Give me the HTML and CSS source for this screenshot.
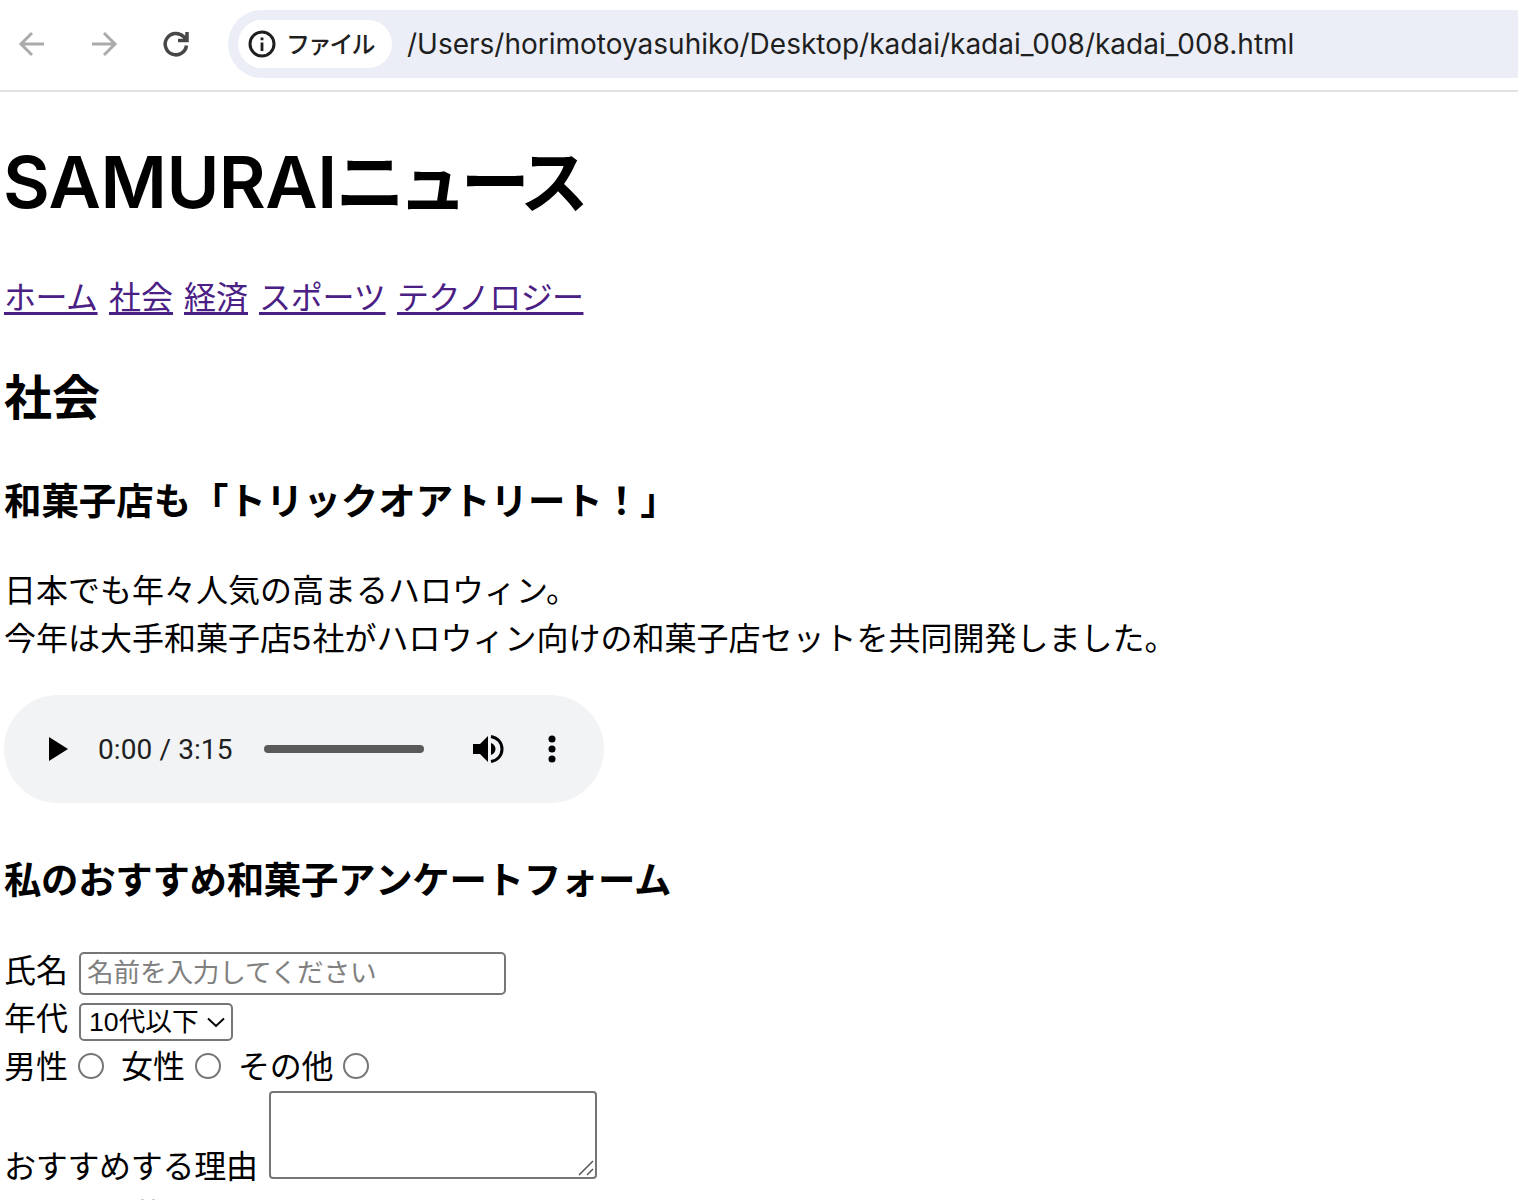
FILE: index.html
```html
<!DOCTYPE html>
<html lang="ja">
<head>
<meta charset="utf-8">
<title>SAMURAIニュース</title>
<link rel="stylesheet" href="styles.css">
</head>
<body>
<div class="toolbar">
  <svg class="tool-icon back" width="28" height="28" viewBox="0 0 28 28"><path d="M26 14H4M14 3 3 14l11 11"/></svg>
  <svg class="tool-icon forward" width="28" height="28" viewBox="0 0 28 28"><path d="M2 14h22M14 3l11 11-11 11"/></svg>
  <svg class="tool-icon reload" width="28" height="28" viewBox="0 0 28 28"><path d="M24.5 15.500A10.700 10.700 0 1 1 21.500 6.600l3 3M25 2v8.500H16"/></svg>
  <div class="address">
    <div class="chip">
      <svg width="28" height="28" viewBox="0 0 28 28"><circle cx="14" cy="14" r="12" fill="none" stroke="#1f1f1f" stroke-width="3"/><path d="M12.600 12.500h2.800v8.500h-2.800zM12.600 7.500h2.800v2.800h-2.800z" fill="#1f1f1f"/></svg>
      <span class="chip-text">ファイル</span>
    </div>
    <span class="url">/Users/horimotoyasuhiko/Desktop/kadai/kadai_008/kadai_008.html</span>
  </div>
</div>
<main class="page">
  <h1 class="title">SAMURAI<span class="title-kana">ニュース</span></h1>
  <nav class="nav"><a class="t3" href="#">ホーム</a><a href="#">社会</a><a href="#">経済</a><a class="t4" href="#">スポーツ</a><a class="t6" href="#">テクノロジー</a></nav>
  <h2 class="section">社会</h2>
  <h3 class="headline">和菓子店も「トリックオアトリート！」</h3>
  <p class="story">日本でも年々人気の高まるハロウィン。<br>今年は大手和菓子店<span class="digit">5</span>社がハロウィン向けの和菓子店セットを共同開発しました。</p>
  <div class="player">
    <svg class="play" width="20" height="24" viewBox="0 0 20 24"><path d="M0 0v24l19-12z"/></svg>
    <span class="time">0:00 / 3:15</span>
    <div class="track"></div>
    <svg class="volume" width="32" height="30" viewBox="0 0 32 30"><path d="M0 10v10h7l8 8V2l-8 8zM18 9v12c3-1 4.500-3.500 4.500-6S21 10 18 9z"/><path d="M18 2.400c7 1.200 11 6.600 11 12.600s-4 11.400-11 12.600" fill="none" stroke="#000" stroke-width="3"/></svg>
    <svg class="more" width="8" height="28" viewBox="0 0 8 28"><circle cx="4" cy="4" r="3.500"/><circle cx="4" cy="14" r="3.500"/><circle cx="4" cy="24" r="3.500"/></svg>
  </div>
  <h3 class="headline form-title">私のおすすめ和菓子アンケートフォーム</h3>
  <form class="survey">
    <div class="row"><label>氏名</label><input class="name" type="text" placeholder="名前を入力してください"></div>
    <div class="row"><label>年代</label><div class="age">10代以下<svg width="18" height="12" viewBox="0 0 18 12"><path d="M1 2.500 9 10 17 2.500" fill="none" stroke="#000" stroke-width="1.900"/></svg></div></div>
    <div class="row radios"><label>男性</label><input class="radio" type="radio" name="g"><label>女性</label><input class="radio" type="radio" name="g"><label class="other">その他</label><input class="radio" type="radio" name="g"></div>
    <div class="row reason"><label>おすすめする理由</label><div class="area"><textarea class="text"></textarea><svg class="grip" width="16" height="16" viewBox="0 0 16 16"><path d="M1 15 15 1M9 15l6-6" fill="none" stroke="#555" stroke-width="1.500"/></svg></div></div>
    <div class="row"><label>好きな和菓子はありますか</label></div>
  </form>
</main>
</body>
</html>
```
FILE: styles.css
```css
html, body { margin: 0; height: 1200px; overflow: hidden; background: #fff; }
body { color: #000; font-family: "Liberation Sans", "Noto Sans CJK JP", sans-serif; font-size: 32px; }
h1, h2, h3, p { margin: 0; white-space: nowrap; }

.toolbar { box-sizing: border-box; height: 92px; border-bottom: 2px solid #e1e1e2; display: flex; align-items: flex-start; padding: 10px 0 0 18px; }
.tool-icon { flex: none; fill: none; stroke: #ababab; stroke-width: 3; margin: 20px 44px 0 0; }
.tool-icon.reload { stroke: #474747; stroke-width: 3.500; margin-right: 38px; }
.address { flex: 1; height: 68px; background: #ebeef6; border-radius: 34px 0 0 34px; display: flex; align-items: center; padding-left: 10px; }
.chip { box-sizing: border-box; width: 154px; height: 48px; border-radius: 24px; background: #fff; display: flex; align-items: center; padding-left: 10px; gap: 10px; flex: none; }
.chip-text { font: 500 24px/46px "Noto Sans CJK JP", sans-serif; height: 48px; letter-spacing: -2.200px; color: #1f1f1f; white-space: nowrap; }
.url { margin-left: 15px; font: 400 28px/68px Inter, sans-serif; color: #1f1f1f; white-space: nowrap; }

.page { padding-left: 4px; }
.title { margin-top: 32px; height: 113px; font: 600 72px/108px Inter, "Noto Sans CJK JP", sans-serif; letter-spacing: -0.500px; text-indent: -1px; }
.title-kana { font-weight: 700; font-family: "Noto Sans CJK JP", sans-serif; font-size: 69px; margin-left: -1px; letter-spacing: -6.500px; }
.nav { margin-top: 37px; height: 48px; line-height: 49px; display: flex; gap: 11px; }
.nav a { color: #4b2085; text-decoration: underline; text-decoration-thickness: 3px; text-underline-offset: 3px; text-decoration-skip-ink: none; width: 64px; white-space: nowrap; }
.nav .t3 { letter-spacing: -0.500px; width: 94px; }
.nav .t4 { letter-spacing: -0.200px; width: 127px; }
.nav .t6 { letter-spacing: -0.600px; width: 188px; }
.section { margin-top: 41px; font-size: 48px; line-height: 72px; height: 72px; }
.headline { margin-top: 39px; font-size: 37.440px; line-height: 56px; height: 56px; }
.story { margin-top: 37px; line-height: 48px; height: 96px; }
.digit { font-family: "Liberation Sans", sans-serif; font-size: 34px; line-height: 1; letter-spacing: 1.500px; }

.player { box-sizing: border-box; margin-top: 32px; width: 600px; height: 108px; border-radius: 54px; background: #f1f3f4; display: flex; align-items: center; padding-left: 45px; }
.player svg { flex: none; }
.time { margin-left: 29px; padding-top: 2px; width: 136px; font: 28px/108px Roboto, sans-serif; letter-spacing: 0.100px; color: #202020; white-space: nowrap; }
.track { margin-left: 30px; width: 160px; height: 8px; border-radius: 4px; background: #5a5a5a; }
.volume { margin-left: 49px; }
.more { margin-left: 43px; }

.form-title { margin-top: 50px; letter-spacing: -0.300px; }
.survey { margin-top: 38px; }
.row { display: flex; height: 48px; line-height: 48px; white-space: nowrap; }
.row > label { flex: none; }
.name { box-sizing: border-box; margin: 5px 0 0 11px; width: 427px; height: 43px; border: 2px solid #767676; border-radius: 5px; padding: 0 0 6px 6px; font: 26.670px "Noto Sans CJK JP", sans-serif; letter-spacing: -0.200px; outline: 0; }
.name::placeholder { color: #808080; }
.age { box-sizing: border-box; margin: 8px 0 0 11px; width: 154px; height: 38px; border: 2px solid #767676; border-radius: 5px; padding-left: 8px; font-size: 26.670px; line-height: 33px; display: flex; align-items: center; gap: 8px; }
.radio { appearance: none; box-sizing: border-box; width: 26px; height: 26px; border: 2px solid #767676; border-radius: 50%; margin: 10px 17px 0 10px; background: #fff; }
.other { letter-spacing: -0.300px; }
.reason { height: 101px; }
.reason > label { width: 265px; padding-top: 52px; letter-spacing: -0.300px; }
.area { position: relative; width: 328px; height: 88px; }
.text { display: block; box-sizing: border-box; width: 328px; height: 88px; margin: 0; border: 2px solid #767676; border-radius: 4px; resize: none; outline: 0; }
.grip { position: absolute; right: 3px; bottom: 3px; }
```
